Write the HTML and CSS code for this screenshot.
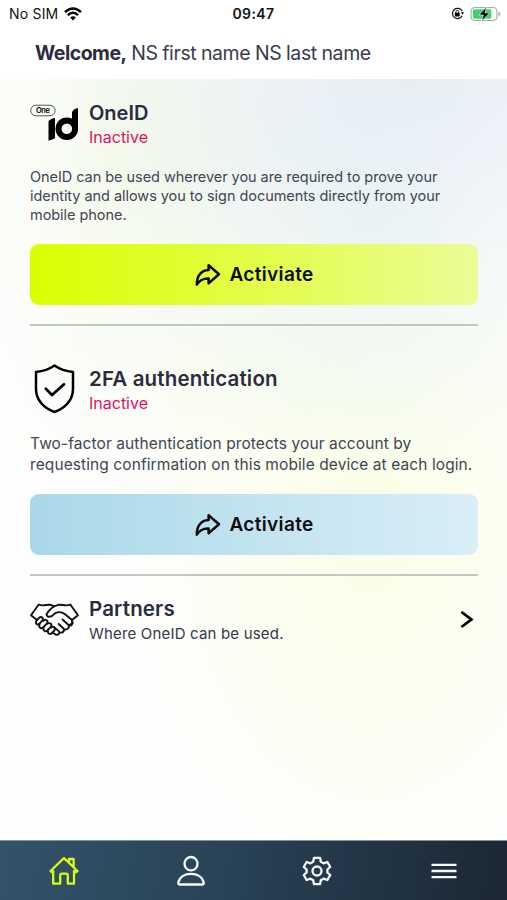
FILE: index.html
```
<!DOCTYPE html>
<html lang="en">
<head>
    <meta charset="UTF-8">
    <meta name="viewport" content="width=device-width, initial-scale=1.0">
    <title>OneID</title>
    <link rel="stylesheet" href="styles.css">
</head>
<body>

<div class="status-bar">
    <div class="status-left">
        <span class="carrier">No SIM</span>
        <svg class="wifi" viewBox="0 0 18 14" width="18" height="14">
            <path d="M1 5.2Q9-2.1 17 5.2" fill="none" stroke="#000" stroke-width="2.5"/>
            <path d="M3.8 8.2Q9 3.4 14.2 8.2" fill="none" stroke="#000" stroke-width="2.4"/>
            <path d="M6.2 10.4Q9 8 11.8 10.4L9 13.4Z"/>
        </svg>
    </div>
    <span class="clock">09:47</span>
    <div class="status-right">
        <svg viewBox="0 0 14 14" width="13" height="13">
            <path d="M12 4.4A5.5 5.5 0 1 0 12 9.4" fill="none" stroke="#111" stroke-width="1.3"/>
            <path d="M10.8 5.6h3.2l-1.6 2.8z"/>
            <rect x="4.2" y="6.3" width="5.2" height="3.8" rx=".6"/>
            <path d="M5.3 6.5V5.2a1.5 1.5 0 0 1 3 0v1.3" fill="none" stroke="#111"/>
        </svg>
        <svg viewBox="0 0 31 16" width="31" height="16">
            <rect x="1" y="1.5" width="26" height="13" rx="4" fill="#fff" stroke="#aaa" stroke-width="1.2"/>
            <rect x="2.8" y="3.2" width="18.6" height="9.6" rx="2" fill="#3fd467"/>
            <path d="M28.5 5.8q2 .4 2 2.2t-2 2.2z" fill="#aaa"/>
            <path d="M16.5 1L8.8 9h4.6l-1.7 6 8-8.2H15z" stroke="#fff" stroke-width=".6"/>
        </svg>
    </div>
</div>

<header>
    <h1><b>Welcome,</b> NS first name NS last name</h1>
</header>

<main class="content">
    <section class="card">
        <div class="card-head">
            <svg class="card-icon" viewBox="0 3 49 48" width="49" height="48">
                <rect x=".7" y="8.2" width="24.4" height="10.6" rx="5.3" fill="none" stroke="#555" stroke-width="1"/>
                <text x="12.9" y="16" class="logo-text" text-anchor="middle" textLength="14">One</text>
                <path d="M18.5 24.5q1-2.5 6.5-3.5v19.6q-1 2.3-6.5 2.8z"/>
                <path d="M42 15.5q.6-3.4 6-4.5V32h-6z"/>
                <circle cx="36.8" cy="31.7" r="8.3" fill="none" stroke="#000" stroke-width="6"/>
            </svg>
            <div class="card-title">
                <h2>OneID</h2>
                <p class="state">Inactive</p>
            </div>
        </div>
        <p class="info">OneID can be used wherever you are required to prove your<br>identity and allows you to sign documents directly from your<br>mobile phone.</p>
        <button class="btn btn-lime">
            <svg viewBox="0 0 26 24" width="26" height="24">
                <path d="M13.6 2.2L24 11.3 13.6 20.2V15.6C8.5 15.3 5 17 1.8 21.6 1.6 13 6 7.3 13.6 6.9Z" fill="none" stroke="#0c0d10" stroke-width="2.5" stroke-linejoin="round"/>
            </svg>
            <span>Activiate</span>
        </button>
    </section>

    <section class="card card-2fa">
        <div class="card-head">
            <svg class="card-icon" viewBox="0 0 49 50" width="49" height="50">
                <path d="M24.5 1.6C30 5.5 36 7.4 43 8V25C43 36 35 44.5 24.5 48 14 44.5 6 36 6 25V8C13 7.4 19 5.5 24.5 1.6Z" fill="none" stroke="#000" stroke-width="2.5" stroke-linejoin="round"/>
                <path d="M15.8 24.7L22 31 34 20.3" fill="none" stroke="#000" stroke-width="2.7" stroke-linecap="round" stroke-linejoin="round"/>
            </svg>
            <div class="card-title">
                <h2>2FA authentication</h2>
                <p class="state">Inactive</p>
            </div>
        </div>
        <p class="info">Two-factor authentication protects your account by<br>requesting confirmation on this mobile device at each login.</p>
        <button class="btn btn-blue">
            <svg viewBox="0 0 26 24" width="26" height="24">
                <path d="M13.6 2.2L24 11.3 13.6 20.2V15.6C8.5 15.3 5 17 1.8 21.6 1.6 13 6 7.3 13.6 6.9Z" fill="none" stroke="#0c0d10" stroke-width="2.5" stroke-linejoin="round"/>
            </svg>
            <span>Activiate</span>
        </button>
    </section>

    <section class="partners">
        <svg class="card-icon" viewBox="0 0 49 34" width="49" height="34">
            <g fill="none" stroke="#111" stroke-width="1.9" stroke-linejoin="round" stroke-linecap="round">
                <path d="M7 17L1 12.2 8.7 1.5C13 3.8 17 1 20.6 1.8L24 3.1"/>
                <path d="M42 17L48 12.2 40.3 1.5C36 3.8 32 1 28.4 1.8 24 3 19 6.5 16.5 11.5 16.8 14.5 21 15 25.3 10.2 29 8.3 32 9 35 11.3L42 17 42.6 20.2 39.4 22"/>
                <path d="M7 17C4.5 20 7.2 23 9.5 20.8L12.2 17.7C14.4 15 11 13.2 9.3 14.7Z"/>
                <path d="M9.5 20.8C8.3 24.8 11.5 26.6 13.5 24.2L17.2 20.2C18.6 17 15 15.8 13.2 18"/>
                <path d="M13.5 24.2C12.8 28 15.8 29.6 17.8 27.2L21 23.7C22.4 20.8 19.5 19.2 17.2 20.8"/>
                <path d="M17.8 27.2C17.4 30.8 20 32 22 30L24.5 27.3C25.8 24.2 23 22.8 21 24.4"/>
                <path d="M22.5 29.5L25.5 31.5C28.5 32.5 30 30.4 29 28.4L25 25M29.3 29.5C32.8 30.2 35 28 33.5 25.5L28.7 21M34 26.5C37.8 27 40 24.5 38.5 22L32.5 16.5M39.4 22.6C41.8 22.8 43 21 42 18"/>
            </g>
        </svg>
        <div class="card-title">
            <h2>Partners</h2>
            <p class="where">Where OneID can be used.</p>
        </div>
        <svg class="chevron" viewBox="0 1 14 18" width="14" height="18">
            <path d="M1.4 1.9L11.4 9.5 1.4 17" fill="none" stroke="#000" stroke-width="2.7"/>
        </svg>
    </section>
</main>

<nav class="tabs">
    <a class="tab active">
        <svg viewBox="0 0 30 30" width="30" height="30">
            <path d="M1.5 15L15 2.2 28.5 15 26.8 16.4 25 15V27.7H18.8V19.5Q18.8 17.6 17 17.6H13Q11.2 17.6 11.2 19.5V27.7H4.2V15L3 16.4ZM20 6.8V3H24.6V10.8"/>
        </svg>
    </a>
    <a class="tab">
        <svg viewBox="0 0 30 32" width="30" height="32">
            <ellipse cx="15" cy="8.7" rx="6.5" ry="6.7"/>
            <path d="M3.3 29.5Q2 29.5 2.3 27.5C3.5 22 8.5 18.9 15 18.9S26.5 22 27.7 27.5Q28 29.5 26.7 29.5Z"/>
        </svg>
    </a>
    <a class="tab">
        <svg viewBox="0 0 30 30" width="30" height="30">
            <path d="M12 1.8H18L18.8 5.8 21.6 7.3 25.4 6 28.2 11 25.4 13.5V16.5L28.2 19 25.4 24 21.6 22.7 18.8 24.2 18 28.2H12L11.2 24.2 8.4 22.7 4.6 24 1.8 19 4.6 16.5V13.5L1.8 11 4.6 6 8.4 7.3 11.2 5.8Z"/>
            <circle cx="15" cy="15" r="4.5"/>
        </svg>
    </a>
    <a class="tab">
        <svg viewBox="0 0 26 18" width="26" height="18">
            <path d="M.5 2.8H25.5M.5 9H25.5M.5 15.2H25.5"/>
        </svg>
    </a>
</nav>

</body>
</html>
```
FILE: styles.css
```
* {
    box-sizing: border-box;
}

body {
    margin: 0;
    height: 900px;
    display: flex;
    flex-direction: column;
    font-family: 'Inter', sans-serif;
    background-color: #fff;
    color: #2b2c40;
    overflow: hidden;
}

h1, h2, p {
    margin: 0;
}

svg {
    display: block;
    flex-shrink: 0;
}

.status-bar {
    height: 27px;
    padding: 0 6px 0 9px;
    display: grid;
    grid-template-columns: 1fr auto 1fr;
    align-items: center;
    color: #111;
    font-size: 14px;
}

.status-left, .status-right {
    display: flex;
    align-items: center;
    gap: 6px;
}

.carrier {
    letter-spacing: 0.2px;
}

.status-right {
    justify-content: flex-end;
}

.clock {
    padding-right: 3px;
    font-weight: 600;
    letter-spacing: 0.4px;
}

header {
    height: 52px;
    padding-left: 35px;
    display: flex;
    align-items: center;
}

h1 {
    font-size: 19.5px;
    font-weight: 400;
    letter-spacing: -0.4px;
    word-spacing: -0.4px;
    color: #3a3b4e;
}

h1 b {
    font-weight: 700;
    letter-spacing: -0.5px;
    color: #2b2c40;
}

.content {
    flex: 1;
    padding: 21px 29px 0 30px;
    background:
        linear-gradient(90deg, rgba(255, 255, 255, 0.6), rgba(255, 255, 255, 0) 100px),
        radial-gradient(ellipse 330px 200px at 410px 0, rgba(230, 237, 246, 0.95), rgba(230, 237, 246, 0)),
        radial-gradient(ellipse 250px 250px at 370px 150px, rgba(234, 243, 244, 0.85), rgba(234, 243, 244, 0)),
        radial-gradient(ellipse 260px 380px at 370px 450px, rgba(249, 255, 224, 0.8), rgba(255, 255, 245, 0)),
        radial-gradient(ellipse 330px 380px at 150px 60px, rgba(243, 249, 233, 0.95), rgba(250, 255, 240, 0)),
        #fefefe;
}

.card {
    height: 226px;
    border-bottom: 2px solid #c3c7c4;
}

.card-2fa {
    height: 250px;
    padding-top: 38px;
}

.card-head {
    display: flex;
    gap: 10px;
}

h2 {
    font-size: 20px;
    line-height: 26px;
    font-weight: 600;
}

.card-2fa h2, .partners h2 {
    font-size: 20.5px;
    letter-spacing: 0.15px;
}

.card-2fa .card-title {
    padding-top: 2px;
}

.state {
    font-size: 16px;
    line-height: 23px;
    color: #dc1466;
}

.logo-text {
    font-size: 7.5px;
    font-weight: 600;
}

.info {
    margin-top: 18px;
    font-size: 14.5px;
    line-height: 19px;
    letter-spacing: -0.05px;
    color: #424553;
    white-space: nowrap;
}

.card-2fa .info {
    margin-top: 19px;
    font-size: 15.5px;
    line-height: 20.5px;
    letter-spacing: 0.09px;
}

.btn {
    width: 448px;
    height: 61px;
    margin-top: 20px;
    padding: 0 0 0 1px;
    display: flex;
    justify-content: center;
    align-items: center;
    gap: 8px;
    border: none;
    border-radius: 9px;
    font-family: inherit;
    font-size: 19px;
    font-weight: 600;
    letter-spacing: 0.35px;
    color: #0c0d10;
}

.btn-lime {
    background: linear-gradient(90deg, #d9ff00, #e3fd48 50%, #ebfc98);
}

.btn-blue {
    margin-top: 19px;
    background: linear-gradient(90deg, #a9d8e9, #c2e3f0 50%, #daeef7);
}

.partners {
    padding: 20px 4px 0 0;
    display: flex;
    align-items: center;
    gap: 10px;
}

.where {
    font-size: 15px;
    line-height: 24px;
    letter-spacing: 0.18px;
    color: #35374a;
}

.chevron {
    margin-left: auto;
    margin-bottom: 2px;
}

.partners .card-icon {
    margin-bottom: 2px;
}

.tabs {
    height: 60px;
    padding-left: 1px;
    display: grid;
    grid-template-columns: repeat(4, 1fr);
    border-top: 1px solid #8294a1;
    background: linear-gradient(100deg, #32536a, #294256 45%, #1b2733);
}

.tab {
    display: flex;
    justify-content: center;
    align-items: center;
}

.tab svg {
    fill: none;
    stroke: #f5f9ff;
    stroke-width: 2.3;
    stroke-linejoin: round;
}

.tab.active svg {
    stroke: #d7fb12;
}
```
